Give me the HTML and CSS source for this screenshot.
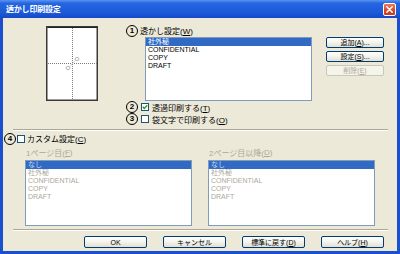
FILE: index.html
```html
<!DOCTYPE html>
<html lang="ja">
<head>
<meta charset="utf-8">
<title>透かし印刷設定</title>
<link rel="stylesheet" href="styles.css">
</head>
<body>
<div class="window">
  <div class="titlebar">
    <span class="title">透かし印刷設定</span>
    <span class="close"><svg width="7" height="7" viewBox="0 0 7 7"><path d="M0.8 0.8 L6.2 6.2 M6.2 0.8 L0.8 6.2" stroke="#fff" stroke-width="1.5" stroke-linecap="round"/></svg></span>
  </div>
  <div class="client">
    <div class="top">
      <div class="preview">
        <svg width="52" height="75" viewBox="0 0 52 75">
          <rect x="0.75" y="0.75" width="50.5" height="73.5" fill="#fff" stroke="#3a3a3a" stroke-width="1.5"/>
          <line x1="1.5" y1="1.5" x2="51" y2="1.5" stroke="#222" stroke-width="1"/>
          <line x1="26.5" y1="2" x2="26.5" y2="74" stroke="#7a7a7a" stroke-dasharray="1 1"/>
          <line x1="2" y1="37.5" x2="51" y2="37.5" stroke="#7a7a7a" stroke-dasharray="1 1"/>
          <ellipse cx="31" cy="33" rx="2" ry="1.6" fill="none" stroke="#b5b5b5" stroke-width="1"/>
          <ellipse cx="22" cy="42" rx="2" ry="1.6" fill="none" stroke="#b5b5b5" stroke-width="1"/>
          <line x1="23" y1="41" x2="30" y2="34" stroke="#d0d0d0" stroke-width="1"/>
        </svg>
      </div>
      <div class="wm">
        <div class="head"><span class="num">1</span><span class="lbl">透かし設定(<u>W</u>)</span></div>
        <div class="mid">
          <div class="listbox lb-main">
            <div class="item sel">社外秘</div>
            <div class="item">CONFIDENTIAL</div>
            <div class="item">COPY</div>
            <div class="item">DRAFT</div>
          </div>
          <div class="side-btns">
            <button class="btn side">追加(<u>A</u>)...</button>
            <button class="btn side">設定(<u>S</u>)...</button>
            <button class="btn side disabled">削除(<u>E</u>)</button>
          </div>
        </div>
        <div class="chk-row"><span class="num">2</span><span class="cb on"><svg width="6" height="6" viewBox="0 0 6 6"><path d="M0.8 2.8 L2.3 4.4 L5.2 1.2" fill="none" stroke="#21a121" stroke-width="1.4"/></svg></span><span>透過印刷する(<u>T</u>)</span></div>
        <div class="chk-row"><span class="num">3</span><span class="cb"></span><span>袋文字で印刷する(<u>O</u>)</span></div>
      </div>
    </div>
    <div class="sep"></div>
    <div class="custom">
      <div class="chk-row custom-head"><span class="num">4</span><span class="cb"></span><span>カスタム設定(<u>C</u>)</span></div>
      <div class="pages">
        <div class="page-col">
          <div class="plabel">1ページ目(<u>F</u>)</div>
          <div class="listbox lb-page dis">
            <div class="item sel">なし</div>
            <div class="item">社外秘</div>
            <div class="item">CONFIDENTIAL</div>
            <div class="item">COPY</div>
            <div class="item">DRAFT</div>
          </div>
        </div>
        <div class="page-col">
          <div class="plabel">2ページ目以降(<u>D</u>)</div>
          <div class="listbox lb-page dis">
            <div class="item sel">なし</div>
            <div class="item">社外秘</div>
            <div class="item">CONFIDENTIAL</div>
            <div class="item">COPY</div>
            <div class="item">DRAFT</div>
          </div>
        </div>
      </div>
    </div>
    <div class="sep sep-bottom"></div>
    <div class="footer">
      <button class="btn foot">OK</button>
      <button class="btn foot">キャンセル</button>
      <button class="btn foot">標準に戻す(<u>D</u>)</button>
      <button class="btn foot">ヘルプ(<u>H</u>)</button>
    </div>
  </div>
</div>
</body>
</html>
```
FILE: styles.css
```css
html, body {
  margin: 0;
  padding: 0;
  background: #ffffff;
}

body {
  font-family: "Liberation Sans", "Noto Sans CJK JP", sans-serif;
}

.window {
  width: 400px;
  height: 254px;
  box-sizing: border-box;
  background: #1a4fcf;
  padding: 0 3px 3px;
  display: flex;
  flex-direction: column;
}

.titlebar {
  height: 18px;
  margin: 0 -3px;
  padding: 0 4px 0 6px;
  display: flex;
  align-items: center;
  justify-content: space-between;
  background: linear-gradient(to bottom, #5a93f2 0%, #2566e0 18%, #1c5ad8 70%, #1548c6 100%);
}

.title {
  color: #ffffff;
  font-family: "Noto Sans CJK JP", sans-serif;
  font-weight: bold;
  font-size: 8px;
  line-height: 1;
  letter-spacing: -0.2px;
}

.close {
  width: 13px;
  height: 13px;
  box-sizing: border-box;
  border: 1px solid #ffffff;
  border-radius: 2px;
  background: linear-gradient(to bottom, #ea7a5c, #d9462a 60%, #c23a1e);
  display: flex;
  align-items: center;
  justify-content: center;
}

.client {
  flex: 1;
  background: #ece9d8;
  display: flex;
  flex-direction: column;
  font-size: 8px;
  color: #000;
}

.top {
  display: flex;
  padding-top: 6px;
}

.preview {
  margin-left: 43px;
  margin-top: 2px;
  width: 52px;
  height: 75px;
}

.preview svg {
  display: block;
}

.wm {
  margin-left: 28px;
  display: flex;
  flex-direction: column;
}

.head {
  height: 13px;
  display: flex;
  align-items: center;
}

.num {
  width: 12px;
  height: 12px;
  flex: none;
  box-sizing: border-box;
  border: 1.5px solid #000;
  border-radius: 50%;
  display: flex;
  align-items: center;
  justify-content: center;
  font-family: "Liberation Sans", sans-serif;
  font-weight: 700;
  font-size: 8px;
  line-height: 1;
  color: #000;
  margin-right: 1px;
}

.lbl {
  margin-left: 1px;
}

.mid {
  display: flex;
  margin-left: 19px;
  height: 64px;
}

.listbox {
  box-sizing: border-box;
  border: 1px solid #7f9db9;
  background: #ffffff;
  overflow: hidden;
}

.lb-main {
  width: 167px;
  height: 64px;
}

.item {
  height: 8px;
  line-height: 8px;
  font-size: 7px;
  padding-left: 2px;
  white-space: nowrap;
  color: #000;
}

.item.sel {
  background: #316ac5;
  color: #ffffff;
}

.dis .item {
  color: #aca899;
}

.dis .item.sel {
  background: #316ac5;
  color: #c9d6ee;
}

.side-btns {
  margin-left: 14px;
  display: flex;
  flex-direction: column;
  gap: 3px;
}

.btn {
  appearance: none;
  margin: 0;
  padding: 0;
  box-sizing: border-box;
  border: 1px solid #003c74;
  border-radius: 2px;
  background: linear-gradient(to bottom, #ffffff, #f5f4ee 45%, #e2dfd3);
  color: #000;
  font-family: "Liberation Sans", "Noto Sans CJK JP", sans-serif;
  font-size: 7px;
  line-height: 1;
  display: flex;
  align-items: center;
  justify-content: center;
}

.btn.side {
  width: 58px;
  height: 11px;
}

.btn.disabled {
  border-color: #c9c7ba;
  background: #f5f4ea;
  color: #aca899;
}

.chk-row {
  height: 12px;
  display: flex;
  align-items: center;
}

.cb {
  width: 8px;
  height: 8px;
  flex: none;
  box-sizing: border-box;
  border: 1px solid #1c5180;
  background: #ffffff;
  margin: 0 3px 0 2px;
  display: flex;
  align-items: center;
  justify-content: center;
}

.cb svg {
  display: block;
}

.sep {
  height: 0;
  border-top: 1px solid #aca899;
  border-bottom: 1px solid #ffffff;
  margin: 4px 9px 0 10px;
}

.custom-head {
  height: 13px;
  margin-top: 1px;
  padding-left: 1px;
}

.custom-head .cb {
  margin: 0 2px 0 0;
}

.pages {
  display: flex;
  gap: 16px;
  margin-left: 22px;
}

.page-col {
  width: 167px;
  display: flex;
  flex-direction: column;
}

.plabel {
  height: 15px;
  display: flex;
  align-items: center;
  padding-left: 1px;
  color: #aca899;
}

.lb-page {
  height: 66px;
}

.sep-bottom {
  margin-top: 3px;
}

.footer {
  display: flex;
  justify-content: flex-end;
  gap: 16px;
  padding-right: 13px;
  margin-top: 5px;
}

.btn.foot {
  width: 63px;
  height: 12px;
}
```
